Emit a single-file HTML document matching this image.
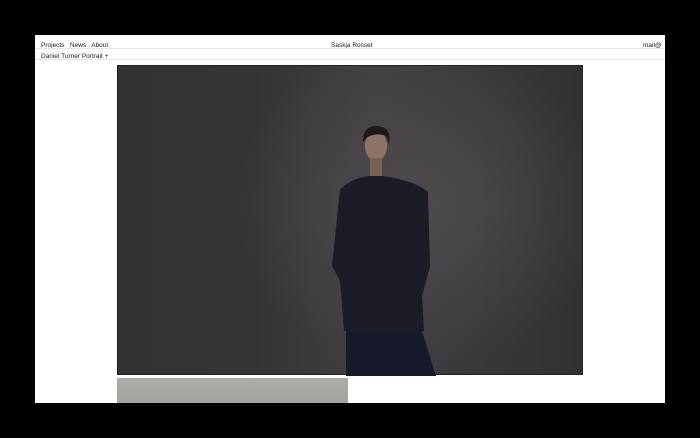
<!DOCTYPE html>
<html><head><style>
html,body{margin:0;padding:0;width:700px;height:438px;background:#000;overflow:hidden;font-family:"Liberation Sans",sans-serif}
.pg{position:absolute;left:35px;top:35px;width:630px;height:368px;background:#fff;overflow:hidden}
.t{position:absolute;font-size:6.5px;color:#222;white-space:nowrap}
.ln{position:absolute;left:0;width:630px;height:1px;background:#e6e6e6}
.ph{position:absolute;left:82px;top:30px;width:466px;height:310px;
background:radial-gradient(ellipse 40% 55% at 65% 45%,#4e4b4e 0%,rgba(72,69,72,0) 100%),linear-gradient(90deg,#343134 0%,#363336 30%,#423f42 55%,#39363a 80%,#323033 100%);border:1px solid #222;box-sizing:border-box}
.p2{position:absolute;left:82px;top:343px;width:231px;height:30px;background:linear-gradient(#a9ada6,#9fa39c)}
</style></head><body>
<div class="pg">
<div class="t" style="left:6px;top:7px">Projects&nbsp;&nbsp; News&nbsp;&nbsp; About</div>
<div class="t" style="left:296px;top:7px">Saskja Rosset</div>
<div class="t" style="left:608px;top:7px">mail@</div>
<div class="ln" style="top:13px"></div>
<div class="t" style="left:6px;top:18px">Daniel Turner Portrait +</div>
<div class="ln" style="top:24px"></div>
<div class="ph">
<svg width="466" height="310" viewBox="0 0 466 310" style="position:absolute;left:0;top:0">
<ellipse cx="258" cy="80" rx="11" ry="15" fill="#8e7468"/>
<path d="M245 76 Q244 60 259 60 Q274 61 271 78 L268 70 Q258 66 248 72Z" fill="#1e1a19"/>
<rect x="252" y="92" width="12" height="18" fill="#7a5e52"/>
<path d="M222 124 Q232 112 252 110 L264 110 Q296 114 310 126 L312 200 L304 230 L306 265 L226 265 L222 215 L214 200 Z" fill="#1b1c26"/>
<path d="M228 265 L304 265 L318 310 L228 310Z" fill="#161a2a"/>
</svg>
</div>
<div class="p2"></div>
</div>
</body></html>
